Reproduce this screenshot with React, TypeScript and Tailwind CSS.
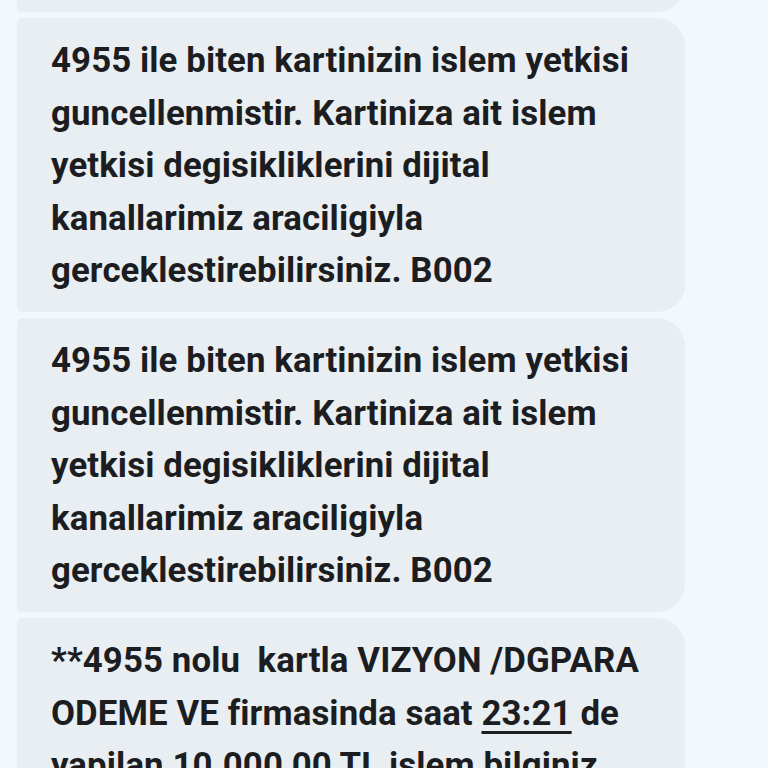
const authLines = [
  "4955 ile biten kartinizin islem yetkisi",
  "guncellenmistir. Kartiniza ait islem",
  "yetkisi degisikliklerini dijital",
  "kanallarimiz araciligiyla",
  "gerceklestirebilirsiniz. B002",
];

function Bubble({ children, className = "" }: { children: React.ReactNode; className?: string }) {
  return (
    <div
      className={
        "w-[668px] rounded-l-[5px] rounded-r-[28px] bg-[#e9eef2] pl-[34px] pr-[20px] pt-[16px] pb-[15.5px] text-[34.8px] font-bold leading-[52.5px] tracking-[0.1px] text-[#1c1d21] " +
        className
      }
      style={{ fontFamily: "Roboto, 'Liberation Sans', sans-serif" }}
    >
      {children}
    </div>
  );
}

function Lines({ lines }: { lines: string[] }) {
  return (
    <>
      {lines.map((l, i) => (
        <div key={i} className="whitespace-pre">
          {l}
        </div>
      ))}
    </>
  );
}

export default function App() {
  return (
    <div className="h-[768px] w-[768px] overflow-hidden bg-[#f2f8fb]">
      <div className="-mt-[282px] flex flex-col gap-[6px] pl-[17px]">
        <Bubble>
          <Lines lines={authLines} />
        </Bubble>
        <Bubble>
          <Lines lines={authLines} />
        </Bubble>
        <Bubble>
          <Lines lines={authLines} />
        </Bubble>
        <Bubble>
          <div className="whitespace-pre">**4955 nolu  kartla VIZYON /DGPARA</div>
          <div className="whitespace-pre">
            ODEME VE firmasinda saat{" "}
            <span className="underline decoration-[2.5px] underline-offset-[6px]">23:21</span> de
          </div>
          <div className="whitespace-pre">yapilan 10.000,00 TL islem bilginiz</div>
          <div className="whitespace-pre">icin tesekkur ederiz. B002</div>
        </Bubble>
      </div>
    </div>
  );
}
